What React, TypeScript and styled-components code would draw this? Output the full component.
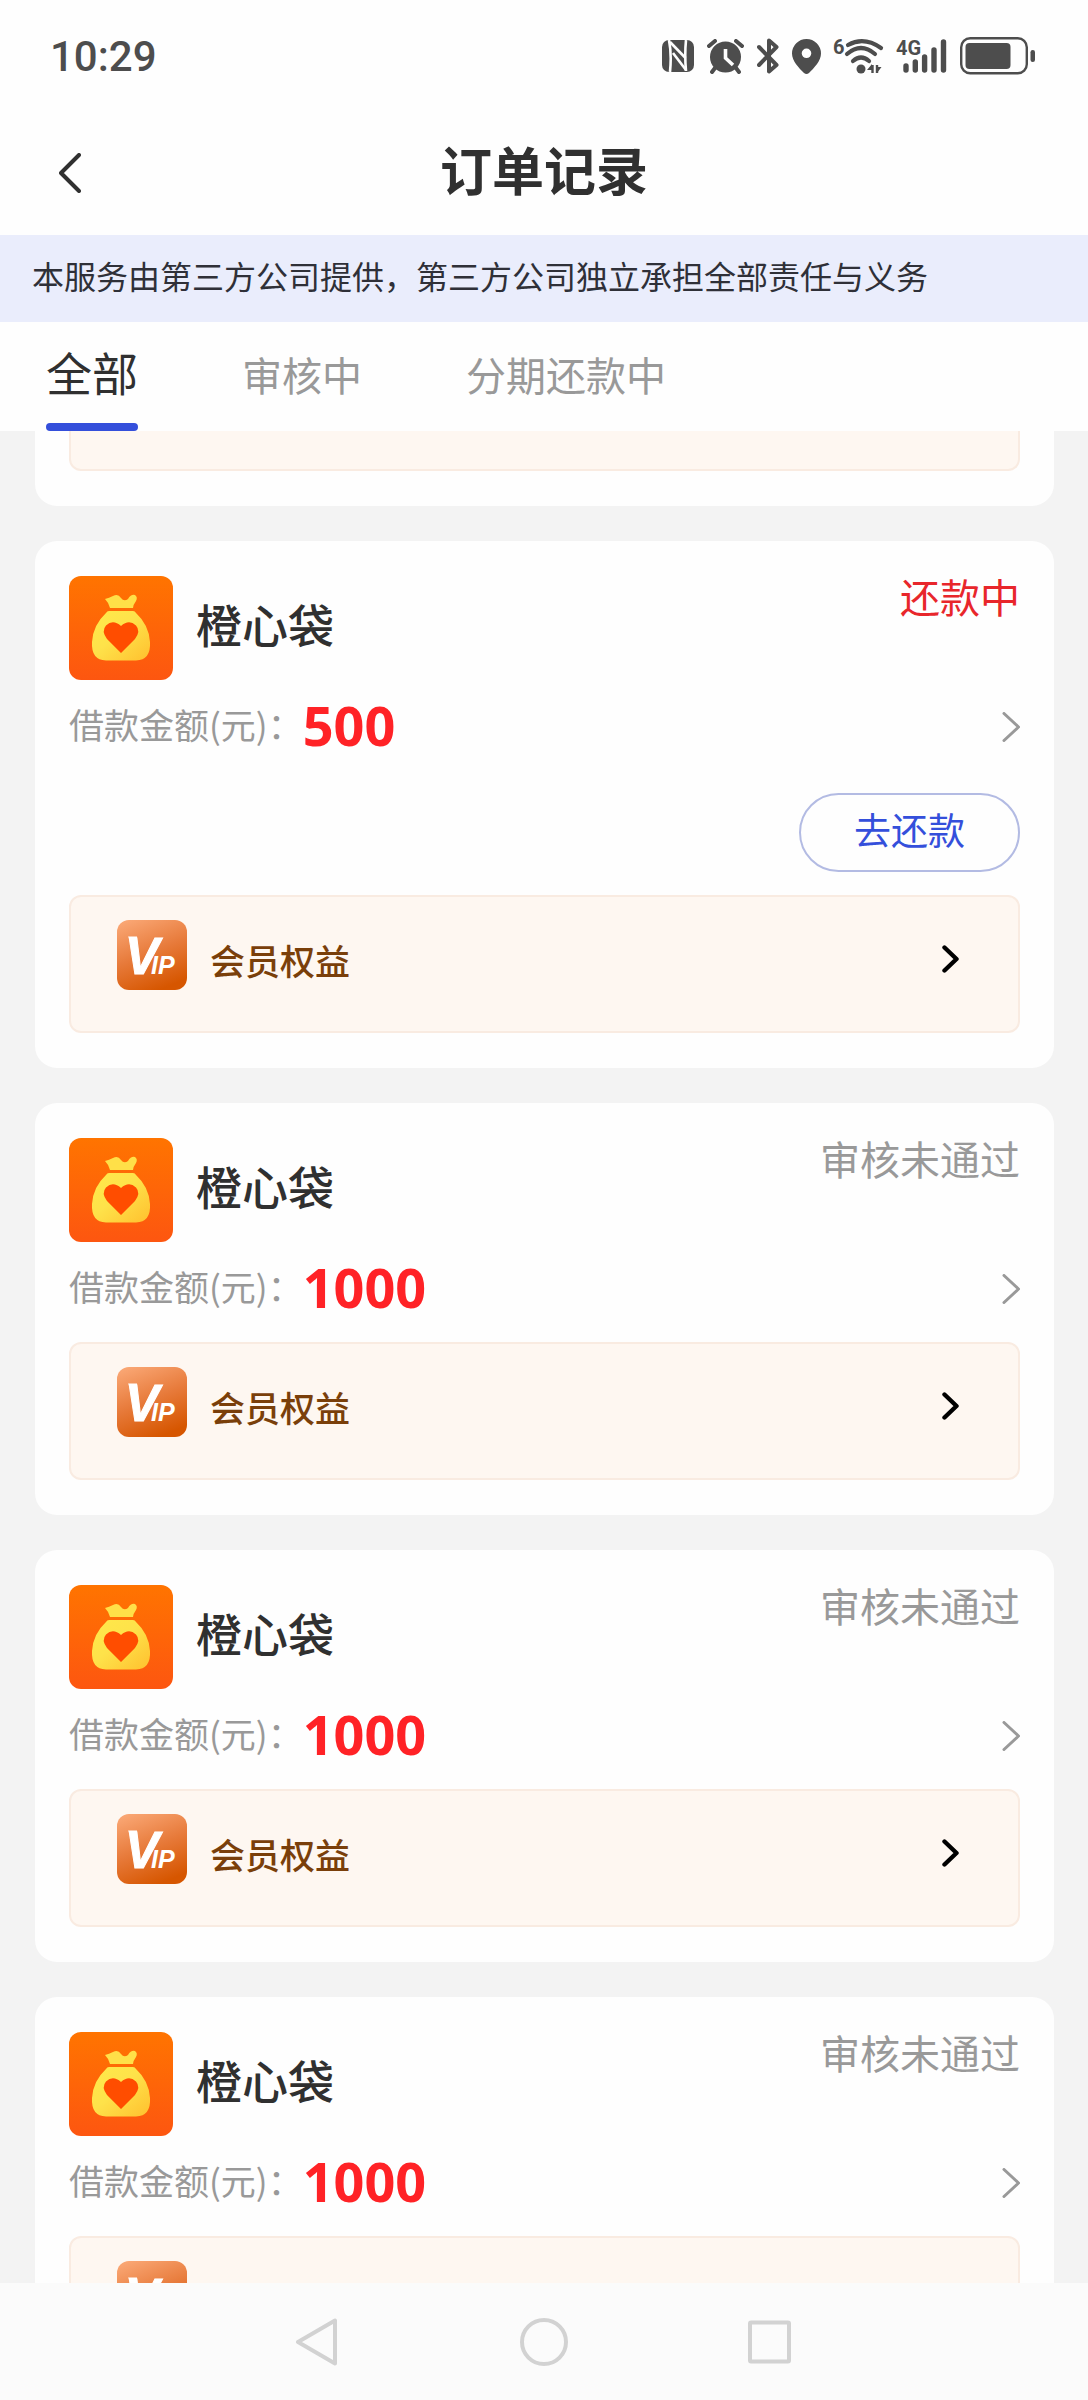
import React, { useState } from 'react';
import styled, { createGlobalStyle } from 'styled-components';

const GlobalStyle = createGlobalStyle`
  *, *::before, *::after { box-sizing: border-box; }
  body {
    margin: 0;
    background: #f3f3f3;
    color: #303030;
    font-family: "Noto Sans", "Noto Sans CJK SC", sans-serif;
  }
  button {
    margin: 0;
    padding: 0;
    border: 0;
    background: none;
    color: inherit;
    font: inherit;
    cursor: pointer;
  }
  svg { display: block; flex: none; }
`;

const Screen = styled.div`
  display: flex;
  flex-direction: column;
  height: 100vh;
  background: #f3f3f3;
  font-family: "Noto Sans CJK SC", sans-serif;
`;

const StatusBar = styled.div`
  flex: none;
  display: flex;
  align-items: center;
  justify-content: space-between;
  height: 112px;
  padding: 0 53px 0 50px;
  background: #fefefe;
  color: #4d4d4d;
`;

const Clock = styled.time`
  padding-top: 2px;
  font: 500 42px/52px Roboto, sans-serif;
`;

const StatusIcons = styled.div`
  display: flex;
  align-items: center;
  gap: 13px;
`;

const Header = styled.header`
  flex: none;
  display: grid;
  grid-template-columns: 100px 1fr 100px;
  align-items: center;
  height: 123px;
  padding: 0 20px 2px;
  background: #fefefe;
`;

const BackButton = styled.button`
  display: flex;
  align-items: center;
  justify-content: center;
  height: 80px;
`;

const Title = styled.h1`
  margin: 0;
  padding-bottom: 8px;
  text-align: center;
  font-size: 52px;
  line-height: 76px;
  font-weight: 700;
`;

const Notice = styled.p`
  flex: none;
  margin: 0;
  padding: 16px 32px 23px;
  background: #eaedfc;
  color: #2f3038;
  font-size: 32px;
  line-height: 48px;
`;

const Tabs = styled.nav`
  flex: none;
  display: flex;
  align-items: stretch;
  gap: 104px;
  height: 109px;
  padding: 0 46px;
  background: #fefefe;
`;

const Tab = styled.button<{ $active: boolean }>`
  display: flex;
  flex-direction: column;
  justify-content: space-between;
  padding-top: ${(p) => (p.$active ? 14 : 17)}px;
  color: ${(p) => (p.$active ? '#303030' : '#999')};
  font-size: ${(p) => (p.$active ? 46 : 40)}px;
  line-height: 70px;
  white-space: nowrap;
  &::after {
    content: '';
    width: 100%;
    height: 8px;
    border-radius: 4px;
    background: ${(p) => (p.$active ? '#344fdb' : 'transparent')};
  }
`;

const List = styled.main`
  flex: 1;
  min-height: 0;
  overflow-y: auto;
  scrollbar-width: none;
  display: flex;
  flex-direction: column;
  gap: 35px;
  padding: 0 34px 35px 35px;
`;

const Card = styled.article`
  flex: none;
  padding: 35px 34px;
  border-radius: 22px;
  background: #fefefe;
`;

const CardTail = styled.div`
  flex: none;
  padding: 0 34px 35px;
  border-radius: 0 0 22px 22px;
  background: #fefefe;
`;

const BenefitTail = styled.div`
  height: 40px;
  border: solid #f9ebe1;
  border-width: 0 2px 2px;
  border-radius: 0 0 12px 12px;
  background: #fef7f1;
`;

const CardHead = styled.div`
  display: flex;
  align-items: center;
  gap: 23px;
`;

const Name = styled.h2`
  flex: 1;
  margin: 0;
  padding-bottom: 10px;
  font-size: 46px;
  line-height: 68px;
  font-weight: 500;
`;

const Status = styled.span<{ $due: boolean }>`
  align-self: flex-start;
  color: ${(p) => (p.$due ? '#e8262b' : '#999')};
  font-size: 40px;
  line-height: 40px;
`;

const AmountRow = styled.button`
  display: flex;
  align-items: center;
  width: 100%;
  height: 92px;
  padding-top: 2px;
  text-align: left;
`;

const AmountLabel = styled.span`
  padding-bottom: 6px;
  color: #999;
  font-size: 35px;
  line-height: 52px;
`;

const Amount = styled.strong`
  flex: 1;
  padding-bottom: 4px;
  color: #ff2226;
  font: 700 54px/74px "Noto Sans", sans-serif;
`;

const Actions = styled.div`
  display: flex;
  justify-content: flex-end;
  padding: 21px 0 15px;
`;

const RepayButton = styled.button`
  width: 221px;
  height: 79px;
  padding-bottom: 8px;
  border: 2px solid #b3bbe3;
  border-radius: 40px;
  color: #344fdb;
  font-size: 37px;
  line-height: 54px;
`;

const Benefit = styled.button`
  display: flex;
  align-items: flex-start;
  gap: 23px;
  width: 100%;
  height: 138px;
  margin-top: 8px;
  padding: 23px 58px 0 46px;
  border: 2px solid #f9ebe1;
  border-radius: 12px;
  background: #fef7f1;
  text-align: left;
`;

const BenefitText = styled.span`
  flex: 1;
  color: #7a3f0a;
  font-size: 35px;
  line-height: 80px;
  font-weight: 500;
`;

const BenefitArrow = styled.span`
  display: flex;
  align-items: center;
  height: 78px;
`;

const SystemNav = styled.nav`
  flex: none;
  display: flex;
  align-items: center;
  justify-content: center;
  gap: 178px;
  height: 117px;
  background: #fbfbfb;
`;

const NfcIcon = () => (
  <svg width="32" height="32" viewBox="0 0 32 32">
    <rect width="32" height="32" rx="7" fill="currentColor" />
    <g fill="none" stroke="#fefefe" strokeWidth="2.6">
      <path d="M7 0 C9 10 9 22 8 32" />
      <path d="M24 0 C23 10 23 20 24 31" />
      <path d="M8 2 L23.500 18" />
      <path d="M11 13 L24 30" />
    </g>
  </svg>
);

const AlarmIcon = () => (
  <svg width="37" height="35" viewBox="0 0 37 35" fill="none" stroke="currentColor" strokeWidth="4" strokeLinecap="round">
    <circle cx="18.500" cy="18" r="15.500" fill="currentColor" stroke="none" />
    <path d="M2 7 L8 2 M35 7 L29 2 M8 29 L5 33 M29 29 L32 33" />
    <path d="M18.500 10 V19 L26 26" stroke="#fefefe" strokeWidth="3.600" strokeLinecap="butt" />
  </svg>
);

const BluetoothIcon = () => (
  <svg width="22" height="36" viewBox="0 0 22 36" fill="none" stroke="currentColor" strokeWidth="4" strokeLinejoin="round" strokeLinecap="round">
    <path d="M2 9 L19.500 27 L12 33.500 V2.500 L19.500 9 L2 27" />
  </svg>
);

const PinIcon = () => (
  <svg width="29" height="35" viewBox="0 0 29 35">
    <path
      d="M14.500 0 A14.500 14.500 0 0 1 29 14.500 C29 22 22 29 17 34 Q14.500 36 12 34 C7 29 0 22 0 14.500 A14.500 14.500 0 0 1 14.500 0 Z M14.500 9.500 A4.800 4.800 0 1 0 14.500 19.100 A4.800 4.800 0 1 0 14.500 9.500 Z"
      fill="currentColor"
      fillRule="evenodd"
    />
  </svg>
);

const WifiIcon = () => (
  <svg width="49" height="36" viewBox="0 0 49 36" overflow="visible" fill="none" stroke="currentColor">
    <text x="-1" y="16" fontFamily="Roboto, sans-serif" fontWeight="700" fontSize="20" fill="currentColor" stroke="none">6</text>
    <path d="M14 7 Q30 -2 47 10" strokeWidth="4.200" strokeLinecap="round" />
    <path d="M13 16 Q27 4 41 16" strokeWidth="4.200" strokeLinecap="round" />
    <path d="M19 23 Q27 16 35 23" strokeWidth="4.200" strokeLinecap="round" />
    <circle cx="27" cy="31" r="4.500" fill="currentColor" stroke="none" />
    <path d="M38.500 27 V35 M43 27 V35" strokeWidth="2.400" />
    <path d="M33 32 L38 26 V32 Z M47.500 29 L43 35 V29 Z" fill="currentColor" stroke="none" />
  </svg>
);

const SignalIcon = () => (
  <svg width="51" height="36" viewBox="0 0 51 36" overflow="visible" fill="none" stroke="currentColor">
    <text x="0" y="17" fontFamily="Roboto, sans-serif" fontWeight="700" fontSize="20" fill="currentColor" stroke="none">4G</text>
    <path d="M10 28 V32 M19.300 24 V32 M28.600 19 V32 M38 12 V32 M47.500 4 V32" strokeWidth="5.400" strokeLinecap="round" />
  </svg>
);

const BatteryIcon = () => (
  <svg width="75" height="38" viewBox="0 0 75 38">
    <rect x="1.200" y="1.200" width="65.600" height="35" rx="9" fill="none" stroke="currentColor" strokeWidth="2.400" />
    <rect x="5.500" y="6" width="45" height="26" rx="4" fill="currentColor" />
    <rect x="70.500" y="13" width="4.500" height="12" rx="2.200" fill="currentColor" />
  </svg>
);

const BackIcon = () => (
  <svg width="22" height="40" viewBox="0 0 22 40" fill="none" stroke="#303030" strokeWidth="4" strokeLinecap="round" strokeLinejoin="round">
    <path d="M20 2 L2 20 L20 38" />
  </svg>
);

const DetailArrow = () => (
  <svg width="18" height="30" viewBox="0 0 18 30" fill="none" stroke="#999" strokeWidth="3" strokeLinecap="round" strokeLinejoin="round">
    <path d="M2 1.500 L16.500 15 L2 28.500" />
  </svg>
);

const BoldArrow = () => (
  <svg width="18" height="28" viewBox="0 0 18 28" fill="none" stroke="#000" strokeWidth="4.400" strokeLinecap="round" strokeLinejoin="round">
    <path d="M2.500 2.500 L14.500 14 L2.500 25.500" />
  </svg>
);

const BagLogo = () => (
  <svg width="104" height="104" viewBox="0 0 104 104">
    <defs>
      <linearGradient id="bag-bg" x1="0" y1="0" x2="0" y2="1">
        <stop offset="0" stopColor="#ff7400" />
        <stop offset="1" stopColor="#fd5610" />
      </linearGradient>
      <linearGradient id="bag-fill" x1="0" y1="0" x2="1" y2="1">
        <stop offset="0" stopColor="#ffe94a" />
        <stop offset="0.450" stopColor="#fee24a" />
        <stop offset="1" stopColor="#ffc02e" />
      </linearGradient>
    </defs>
    <rect width="104" height="104" rx="12" fill="url(#bag-bg)" />
    <path d="M36 23 Q40 22 44 20 Q49 17 52 22 Q55 26 59 23 Q62 18 66 19 Q69 21 67 25 Q64 29 64 32 H41 Q40 27 36 23 Z" fill="#ffe048" />
    <path d="M40 35 H64 Q66 35 67 37 Q80 49 81 66 Q82 84 67 84.500 H37 Q22 84 23 66 Q24 49 37 37 Q38 35 40 35 Z" fill="url(#bag-fill)" />
    <path d="M52 77 L38 63 Q32 55 37 49.500 Q44 43 52 50 Q60 43 67 49.500 Q72 55 66 63 Z" fill="#ff4d00" />
  </svg>
);

const VipLogo = () => (
  <svg width="70" height="70" viewBox="0 0 70 70">
    <defs>
      <linearGradient id="vip-bg" x1="0.200" y1="0" x2="0.600" y2="1">
        <stop offset="0" stopColor="#f9a572" />
        <stop offset="0.500" stopColor="#e77a3a" />
        <stop offset="1" stopColor="#d65600" />
      </linearGradient>
    </defs>
    <rect width="70" height="70" rx="12" fill="url(#vip-bg)" />
    <path d="M11 16.500 H20 V20 H13 Z" fill="#fff" />
    <text x="8" y="54" fill="#fff" stroke="#fff" strokeWidth="1" fontFamily="Liberation Sans, sans-serif" fontWeight="700" fontStyle="italic" fontSize="51">
      V<tspan dx="-8" fontSize="25" strokeWidth="0">IP</tspan>
    </text>
  </svg>
);

interface Order {
  id: number;
  amount: number;
  status: string;
  due: boolean;
}

const orders: Order[] = [
  { id: 1, amount: 500, status: '还款中', due: true },
  { id: 2, amount: 1000, status: '审核未通过', due: false },
  { id: 3, amount: 1000, status: '审核未通过', due: false },
  { id: 4, amount: 1000, status: '审核未通过', due: false },
];

const tabs = ['全部', '审核中', '分期还款中'];

const OrderCard = ({ order }: { order: Order }) => (
  <Card>
    <CardHead>
      <BagLogo />
      <Name>橙心袋</Name>
      <Status $due={order.due}>{order.status}</Status>
    </CardHead>
    <AmountRow type="button">
      <AmountLabel>借款金额(元)：</AmountLabel>
      <Amount>{order.amount}</Amount>
      <DetailArrow />
    </AmountRow>
    {order.due && (
      <Actions>
        <RepayButton type="button">去还款</RepayButton>
      </Actions>
    )}
    <Benefit type="button">
      <VipLogo />
      <BenefitText>会员权益</BenefitText>
      <BenefitArrow>
        <BoldArrow />
      </BenefitArrow>
    </Benefit>
  </Card>
);

export default function App() {
  const [active, setActive] = useState(0);

  return (
    <Screen>
      <GlobalStyle />
      <StatusBar>
        <Clock>10:29</Clock>
        <StatusIcons>
          <NfcIcon />
          <AlarmIcon />
          <BluetoothIcon />
          <PinIcon />
          <WifiIcon />
          <SignalIcon />
          <BatteryIcon />
        </StatusIcons>
      </StatusBar>
      <Header>
        <BackButton type="button" aria-label="返回">
          <BackIcon />
        </BackButton>
        <Title>订单记录</Title>
      </Header>
      <Notice>本服务由第三方公司提供，第三方公司独立承担全部责任与义务</Notice>
      <Tabs>
        {tabs.map((label, i) => (
          <Tab key={label} type="button" $active={i === active} onClick={() => setActive(i)}>
            {label}
          </Tab>
        ))}
      </Tabs>
      <List>
        {/* Lower end of the order that lies under the tabs */}
        <CardTail>
          <BenefitTail />
        </CardTail>
        {orders.map((order) => (
          <OrderCard key={order.id} order={order} />
        ))}
      </List>
      <SystemNav>
        <button type="button" aria-label="后退">
          <svg width="48" height="48" viewBox="0 0 48 48" fill="none" stroke="#d2d2d2" strokeWidth="4" strokeLinejoin="round">
            <path d="M41 2.500 V45.500 L4 24 Z" />
          </svg>
        </button>
        <button type="button" aria-label="主页">
          <svg width="48" height="48" viewBox="0 0 48 48" fill="none" stroke="#d2d2d2" strokeWidth="4">
            <circle cx="24" cy="24" r="22" />
          </svg>
        </button>
        <button type="button" aria-label="最近任务">
          <svg width="48" height="48" viewBox="0 0 48 48" fill="none" stroke="#d2d2d2" strokeWidth="4" strokeLinejoin="round">
            <rect x="4" y="4.500" width="39" height="39" rx="1" />
          </svg>
        </button>
      </SystemNav>
    </Screen>
  );
}
